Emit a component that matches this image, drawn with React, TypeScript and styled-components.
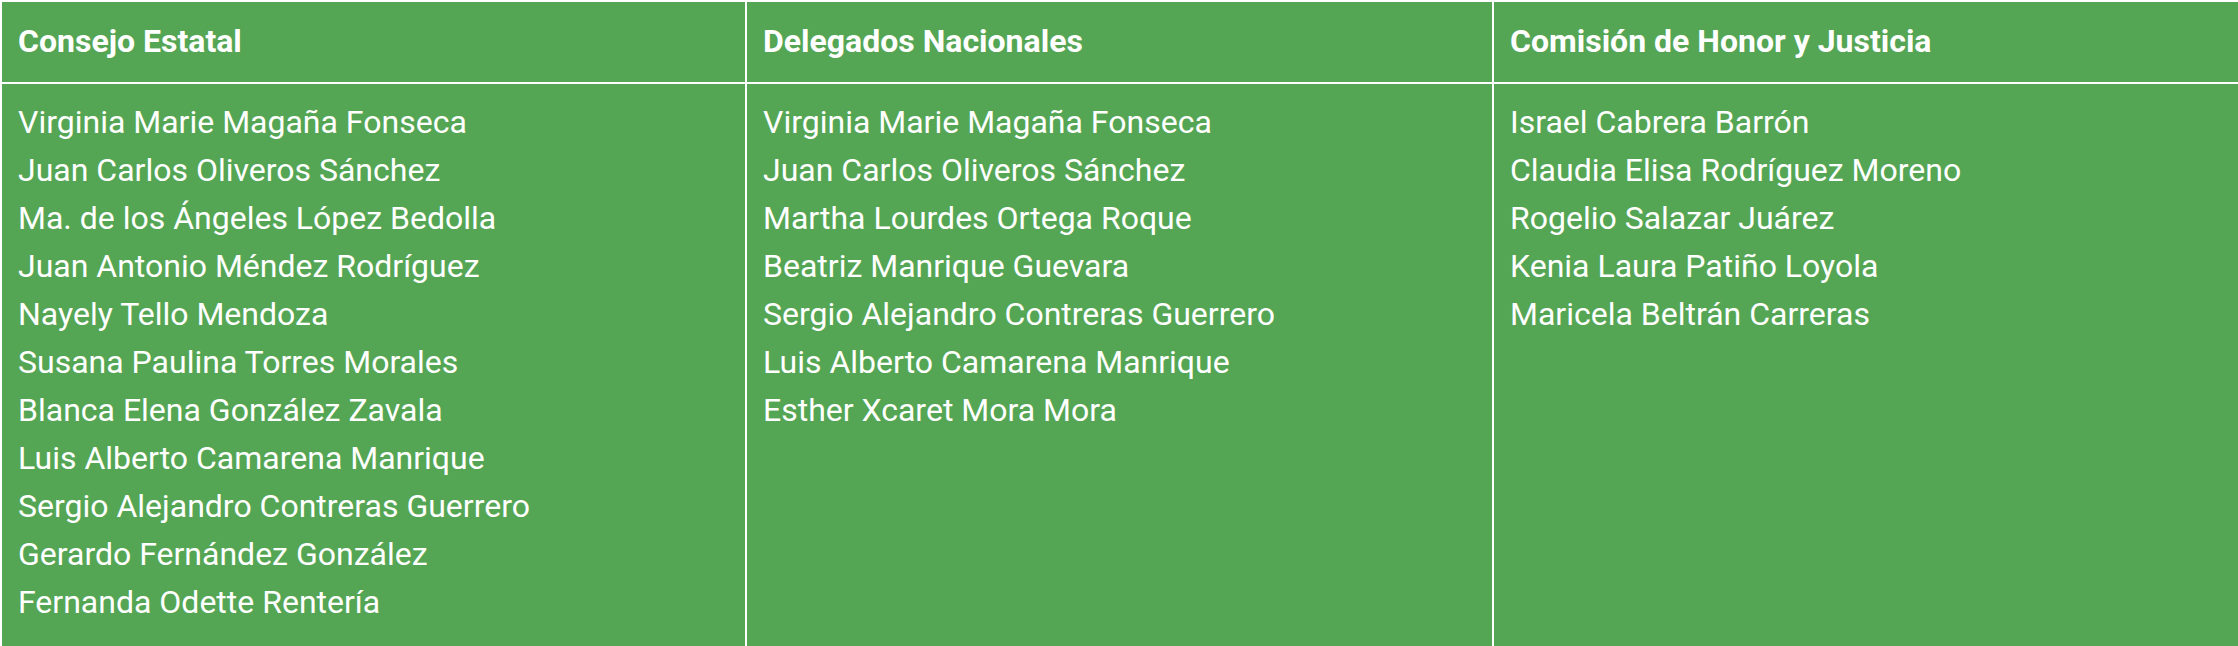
import styled, { createGlobalStyle } from "styled-components";

const GlobalStyle = createGlobalStyle`
  *, *::before, *::after {
    box-sizing: border-box;
  }
  body {
    margin: 0;
    background: #ffffff;
    font-family: Roboto, "Liberation Sans", sans-serif;
    overflow: hidden;
  }
`;

const GREEN = "#55a654";

const columns = [
  {
    title: "Consejo Estatal",
    width: 743,
    names: [
      "Virginia Marie Magaña Fonseca",
      "Juan Carlos Oliveros Sánchez",
      "Ma. de los Ángeles López Bedolla",
      "Juan Antonio Méndez Rodríguez",
      "Nayely Tello Mendoza",
      "Susana Paulina Torres Morales",
      "Blanca Elena González Zavala",
      "Luis Alberto Camarena Manrique",
      "Sergio Alejandro Contreras Guerrero",
      "Gerardo Fernández González",
      "Fernanda Odette Rentería",
    ],
  },
  {
    title: "Delegados Nacionales",
    width: 745,
    names: [
      "Virginia Marie Magaña Fonseca",
      "Juan Carlos Oliveros Sánchez",
      "Martha Lourdes Ortega Roque",
      "Beatriz Manrique Guevara",
      "Sergio Alejandro Contreras Guerrero",
      "Luis Alberto Camarena Manrique",
      "Esther Xcaret Mora Mora",
    ],
  },
  {
    title: "Comisión de Honor y Justicia",
    width: 745,
    names: [
      "Israel Cabrera Barrón",
      "Claudia Elisa Rodríguez Moreno",
      "Rogelio Salazar Juárez",
      "Kenia Laura Patiño Loyola",
      "Maricela Beltrán Carreras",
    ],
  },
];

const S = {
  Table: styled.div`
    display: flex;
    align-items: stretch;
    gap: 2px;
    padding: 2px 0 0 2px;
    background: #ffffff;
    width: 2240px;
  `,
  Column: styled.div<{ $w: number }>`
    display: flex;
    flex-direction: column;
    gap: 2px;
    width: ${(p) => p.$w}px;
    flex: none;
  `,
  Head: styled.div`
    display: flex;
    align-items: center;
    height: 80px;
    background: ${GREEN};
    color: #ffffff;
    font-weight: 700;
    font-size: 32px;
    padding: 0 16px 2px;
  `,
  Body: styled.ul`
    flex: 1;
    list-style: none;
    margin: 0;
    background: ${GREEN};
    color: #ffffff;
    font-size: 32px;
    line-height: 48px;
    padding: 14px 16px 40px;
  `,
  Name: styled.li`
    white-space: nowrap;
  `,
};

export default function App() {
  return (
    <>
      <GlobalStyle />
      <S.Table>
        {columns.map((col) => (
          <S.Column key={col.title} $w={col.width}>
            <S.Head>{col.title}</S.Head>
            <S.Body>
              {col.names.map((n) => (
                <S.Name key={n}>{n}</S.Name>
              ))}
            </S.Body>
          </S.Column>
        ))}
      </S.Table>
    </>
  );
}
